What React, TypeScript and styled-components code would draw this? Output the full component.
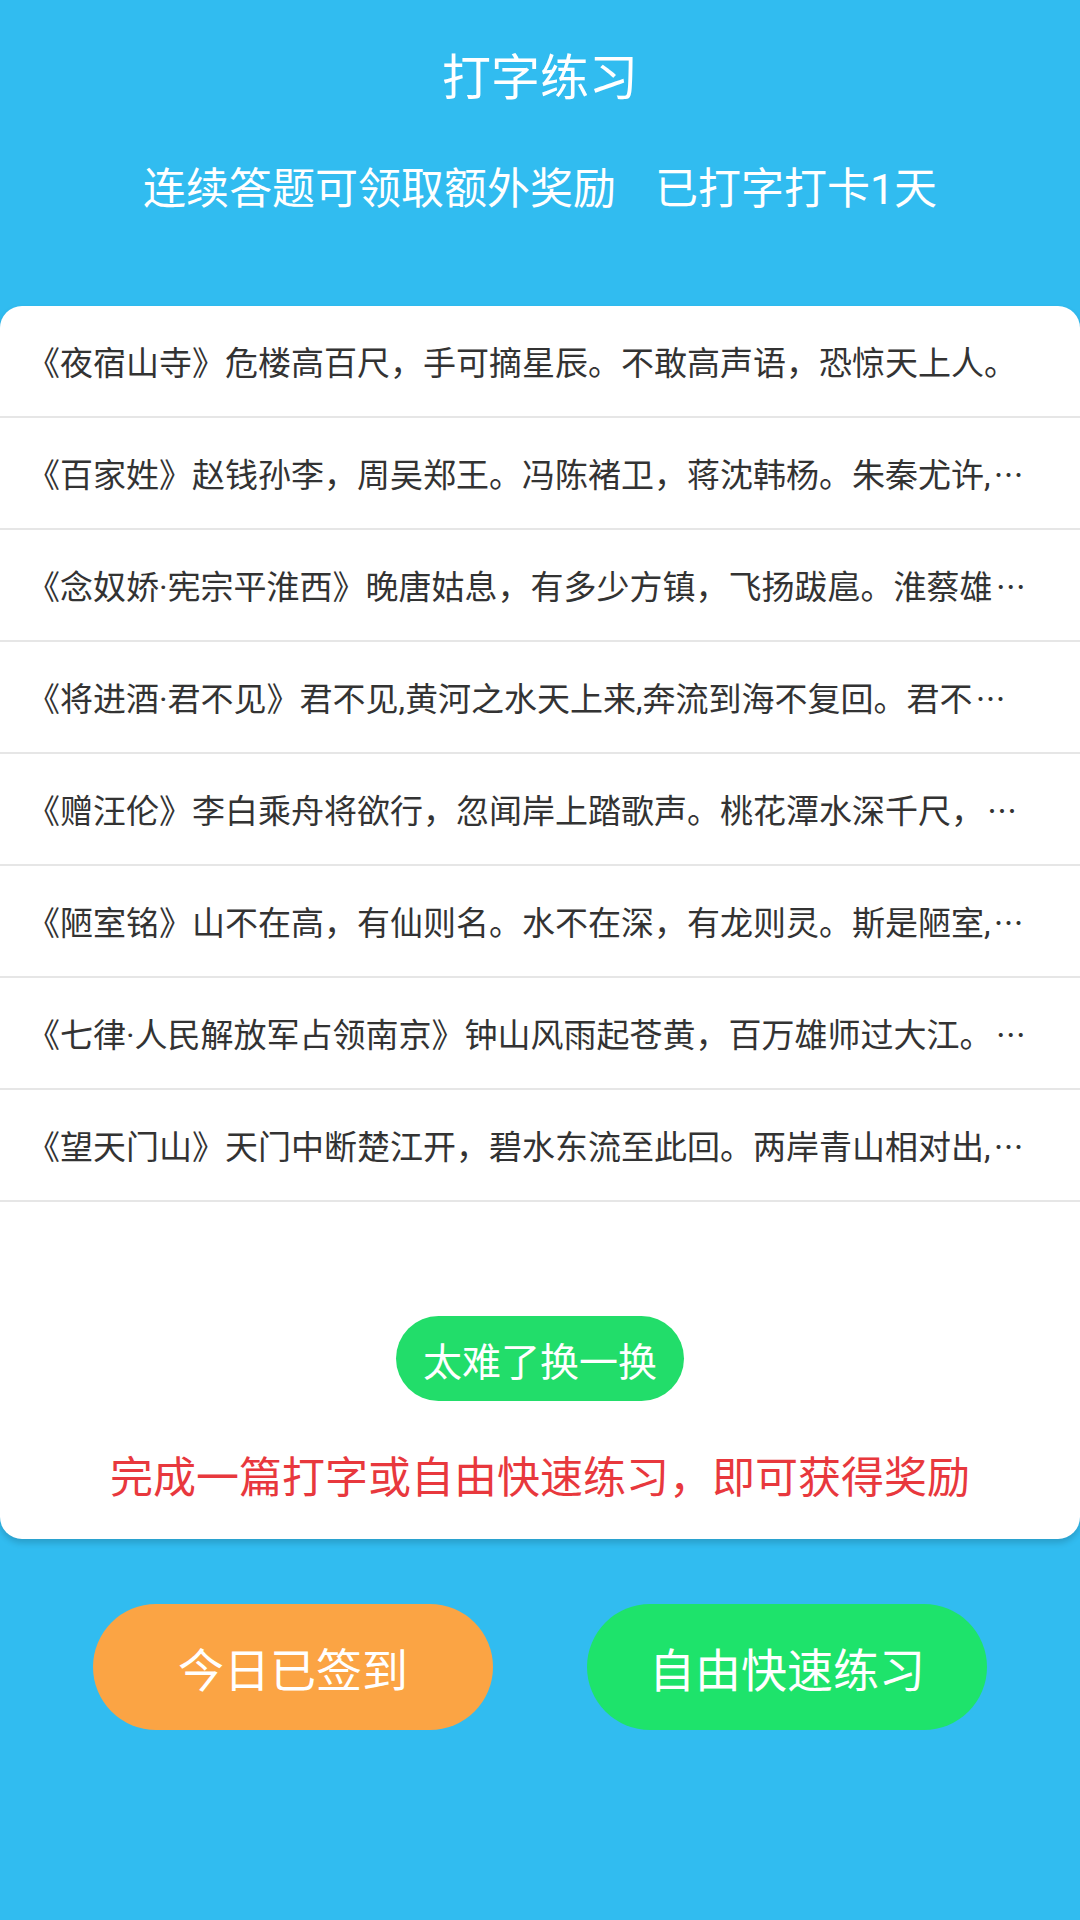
import React from "react";
import styled, { createGlobalStyle } from "styled-components";

const GlobalStyle = createGlobalStyle`
  html, body {
    margin: 0;
    padding: 0;
    background: #31bcf0;
  }
  * { box-sizing: border-box; }
  body {
    font-family: Roboto, "Noto Sans CJK SC", sans-serif;
  }
`;

const Page = styled.div`
  width: 1080px;
  min-height: 1920px;
  background: #31bcf0;
  display: flex;
  flex-direction: column;
  align-items: stretch;
`;

const Header = styled.header`
  display: flex;
  flex-direction: column;
  align-items: center;
  padding-top: 49px;
  gap: 50px;
  margin-bottom: 87px;
`;

const Title = styled.h1`
  margin: 0;
  font-size: 49px;
  line-height: 60px;
  font-weight: 400;
  color: #ffffff;
`;

const Subtitle = styled.div`
  display: flex;
  gap: 39px;
  font-size: 43px;
  line-height: 60px;
  color: #ffffff;
`;

const Card = styled.section`
  background: #ffffff;
  border-radius: 22px;
  box-shadow: 0 4px 6px rgba(0, 0, 0, 0.16);
  display: flex;
  flex-direction: column;
  align-items: center;
  padding-bottom: 31px;
`;

const List = styled.ul`
  list-style: none;
  margin: 0;
  padding: 0;
  width: 100%;
`;

const Row = styled.li`
  height: 112px;
  display: flex;
  align-items: center;
  padding: 0 40px 0 27px;
  border-bottom: 2px solid #e6e6e6;
  font-size: 33px;
  color: #333333;
  white-space: nowrap;
  overflow: hidden;
`;

const Ellipsis = styled.span`
  font-family: "Noto Sans CJK SC", sans-serif;
  font-size: 30px;
  margin-left: 3px;
`;

const SwapButton = styled.button`
  margin-top: 114px;
  width: 288px;
  height: 85px;
  border: none;
  border-radius: 43px;
  background: #22dd6a;
  color: #ffffff;
  font-family: Roboto, "Noto Sans CJK SC", sans-serif;
  font-size: 39px;
  padding: 0;
`;

const Notice = styled.p`
  margin: 47px 0 0;
  font-size: 43px;
  line-height: 60px;
  color: #e8383d;
`;

const Actions = styled.div`
  display: flex;
  justify-content: center;
  gap: 94px;
  margin-top: 65px;
`;

const ActionButton = styled.button<{ $color: string }>`
  width: 400px;
  height: 126px;
  border: none;
  border-radius: 63px;
  background: ${(p) => p.$color};
  color: #ffffff;
  font-family: Roboto, "Noto Sans CJK SC", sans-serif;
  font-size: 46px;
  padding: 0;
`;

const poems: { text: string; more: boolean }[] = [
  { text: "《夜宿山寺》危楼高百尺，手可摘星辰。不敢高声语，恐惊天上人。", more: false },
  { text: "《百家姓》赵钱孙李，周吴郑王。冯陈褚卫，蒋沈韩杨。朱秦尤许,", more: true },
  { text: "《念奴娇·宪宗平淮西》晚唐姑息，有多少方镇，飞扬跋扈。淮蔡雄", more: true },
  { text: "《将进酒·君不见》君不见,黄河之水天上来,奔流到海不复回。君不", more: true },
  { text: "《赠汪伦》李白乘舟将欲行，忽闻岸上踏歌声。桃花潭水深千尺，", more: true },
  { text: "《陋室铭》山不在高，有仙则名。水不在深，有龙则灵。斯是陋室,", more: true },
  { text: "《七律·人民解放军占领南京》钟山风雨起苍黄，百万雄师过大江。", more: true },
  { text: "《望天门山》天门中断楚江开，碧水东流至此回。两岸青山相对出,", more: true },
];

export default function App() {
  return (
    <>
      <GlobalStyle />
      <Page>
        <Header>
          <Title>打字练习</Title>
          <Subtitle>
            <span>连续答题可领取额外奖励</span>
            <span>已打字打卡1天</span>
          </Subtitle>
        </Header>
        <Card>
          <List>
            {poems.map((p) => (
              <Row key={p.text}>
                {p.text}
                {p.more && <Ellipsis>…</Ellipsis>}
              </Row>
            ))}
          </List>
          <SwapButton>太难了换一换</SwapButton>
          <Notice>完成一篇打字或自由快速练习，即可获得奖励</Notice>
        </Card>
        <Actions>
          <ActionButton $color="#fba444">今日已签到</ActionButton>
          <ActionButton $color="#1ee36b">自由快速练习</ActionButton>
        </Actions>
      </Page>
    </>
  );
}
